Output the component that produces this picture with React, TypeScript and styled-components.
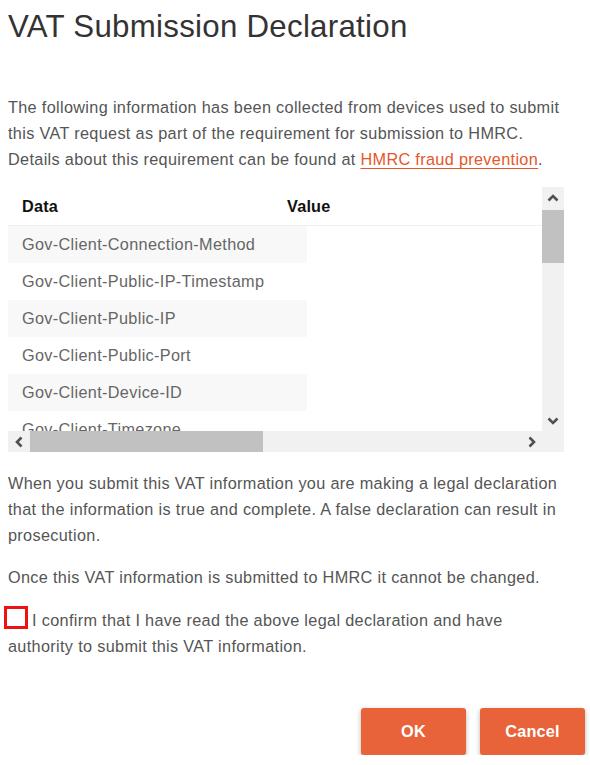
import React from "react";
import styled, { createGlobalStyle } from "styled-components";

const GlobalStyle = createGlobalStyle`
  html, body { margin: 0; padding: 0; background: #fff; }
  body { font-family: "Liberation Sans", Arial, sans-serif; }
  * { box-sizing: border-box; }
`;

const Dialog = styled.div`
  width: 590px;
  padding: 9px 5px 0 8px;
  display: flex;
  flex-direction: column;
`;

const Title = styled.h1`
  margin: 0;
  font-size: 31.25px;
  font-weight: normal;
  letter-spacing: 0.27px;
  line-height: 36px;
  color: #333;
`;

const Para = styled.p<{ $mt: number }>`
  margin: ${(p) => p.$mt}px 0 0;
  width: 556px;
  font-size: 16.25px;
  letter-spacing: 0.33px;
  line-height: 26px;
  color: #555;
`;

const Link = styled.a`
  color: #e5572b;
  text-decoration: underline;
  text-underline-offset: 3px;
`;

const ScrollFrame = styled.div`
  margin-top: 15px;
  width: 556px;
  display: grid;
  grid-template-columns: 534px 22px;
  grid-template-rows: 244px 21px;
`;

const Viewport = styled.div`
  overflow: hidden;
  background: #fff;
`;

const Table = styled.div`
  width: 1130px;
  font-size: 16.25px;
  letter-spacing: 0.33px;
`;

const HeaderRow = styled.div`
  display: grid;
  grid-template-columns: 265px 1fr;
  height: 39px;
  padding-left: 14px;
  border-bottom: 1px solid #efefef;
  align-items: center;
  font-weight: bold;
  letter-spacing: 0.2px;
  color: #111;
`;

const Row = styled.div`
  display: flex;
  height: 37px;
  line-height: 37px;
`;

const DataCell = styled.div<{ $striped: boolean }>`
  width: 299px;
  padding-left: 14px;
  color: #666;
  white-space: nowrap;
  background: ${(p) => (p.$striped ? "#f8f8f8" : "#fff")};
`;

const ValueCell = styled.div`
  flex: 1;
  background: #fff;
`;

const VBar = styled.div`
  background: #f1f1f1;
  display: flex;
  flex-direction: column;
`;

const HBar = styled.div`
  grid-column: 1 / span 2;
  background: #f1f1f1;
  display: flex;
`;

const ArrowBtn = styled.div<{ $w: number; $h: number }>`
  width: ${(p) => p.$w}px;
  height: ${(p) => p.$h}px;
  flex: none;
  display: flex;
  align-items: center;
  justify-content: center;
`;

const VTrack = styled.div`
  flex: 1;
  padding-top: 2px;
`;

const VThumb = styled.div`
  height: 53px;
  background: #c1c1c1;
`;

const HTrack = styled.div`
  flex: 1;
  padding-left: 1px;
`;

const HThumb = styled.div`
  width: 233px;
  height: 100%;
  background: #c1c1c1;
`;

const Corner = styled.div`
  width: 22px;
  flex: none;
`;

const CheckBox = styled.span`
  display: inline-block;
  width: 24px;
  height: 23px;
  border: 3px solid #ee1111;
  margin-left: -4px;
  margin-right: 4px;
  vertical-align: -3px;
`;

const Footer = styled.div`
  margin-top: 49px;
  display: flex;
  justify-content: flex-end;
  gap: 14px;
`;

const Button = styled.button`
  width: 105px;
  height: 47px;
  border: none;
  border-radius: 3px;
  background: #e8633a;
  color: #fff;
  font-family: "Liberation Sans", Arial, sans-serif;
  font-size: 16.25px;
  font-weight: bold;
  letter-spacing: 0.2px;
  box-shadow: 0 2px 5px rgba(0, 0, 0, 0.3);
  cursor: pointer;
`;

const Chevron = ({ dir }: { dir: "up" | "down" | "left" | "right" }) => {
  const rot = { up: 0, right: 90, down: 180, left: 270 }[dir];
  return (
    <svg width="12" height="12" viewBox="0 0 12 12">
      <polyline
        points="1.5,8.5 6,4 10.5,8.5"
        fill="none"
        stroke="#505050"
        strokeWidth="2.6"
        transform={`rotate(${rot} 6 6)`}
      />
    </svg>
  );
};

const rows = [
  "Gov-Client-Connection-Method",
  "Gov-Client-Public-IP-Timestamp",
  "Gov-Client-Public-IP",
  "Gov-Client-Public-Port",
  "Gov-Client-Device-ID",
  "Gov-Client-Timezone",
  "Gov-Client-Local-IPs",
  "Gov-Client-Local-IPs-Timestamp",
  "Gov-Client-Screens",
  "Gov-Client-Window-Size",
  "Gov-Client-Browser-Plugins",
  "Gov-Client-Browser-JS-User-Agent",
  "Gov-Client-Browser-Do-Not-Track",
  "Gov-Client-Multi-Factor",
  "Gov-Vendor-Version",
  "Gov-Vendor-License-IDs",
];

export default function App() {
  return (
    <>
      <GlobalStyle />
      <Dialog>
        <Title>VAT Submission Declaration</Title>
        <Para $mt={49}>
          The following information has been collected from devices used to submit this VAT
          request as part of the requirement for submission to HMRC. Details about this
          requirement can be found at <Link href="#">HMRC fraud prevention</Link>.
        </Para>
        <ScrollFrame>
          <Viewport>
            <Table>
              <HeaderRow>
                <span>Data</span>
                <span>Value</span>
              </HeaderRow>
              {rows.map((r, i) => (
                <Row key={r}>
                  <DataCell $striped={i % 2 === 0}>{r}</DataCell>
                  <ValueCell />
                </Row>
              ))}
            </Table>
          </Viewport>
          <VBar>
            <ArrowBtn $w={22} $h={21}>
              <Chevron dir="up" />
            </ArrowBtn>
            <VTrack>
              <VThumb />
            </VTrack>
            <ArrowBtn $w={22} $h={21}>
              <Chevron dir="down" />
            </ArrowBtn>
          </VBar>
          <HBar>
            <ArrowBtn $w={21} $h={21}>
              <Chevron dir="left" />
            </ArrowBtn>
            <HTrack>
              <HThumb />
            </HTrack>
            <ArrowBtn $w={21} $h={21}>
              <Chevron dir="right" />
            </ArrowBtn>
            <Corner />
          </HBar>
        </ScrollFrame>
        <Para $mt={18}>
          When you submit this VAT information you are making a legal declaration that the
          information is true and complete. A false declaration can result in prosecution.
        </Para>
        <Para $mt={16}>Once this VAT information is submitted to HMRC it cannot be changed.</Para>
        <Para $mt={16}>
          <CheckBox />I confirm that I have read the above legal declaration and have authority
          to submit this VAT information.
        </Para>
        <Footer>
          <Button>OK</Button>
          <Button>Cancel</Button>
        </Footer>
      </Dialog>
    </>
  );
}
